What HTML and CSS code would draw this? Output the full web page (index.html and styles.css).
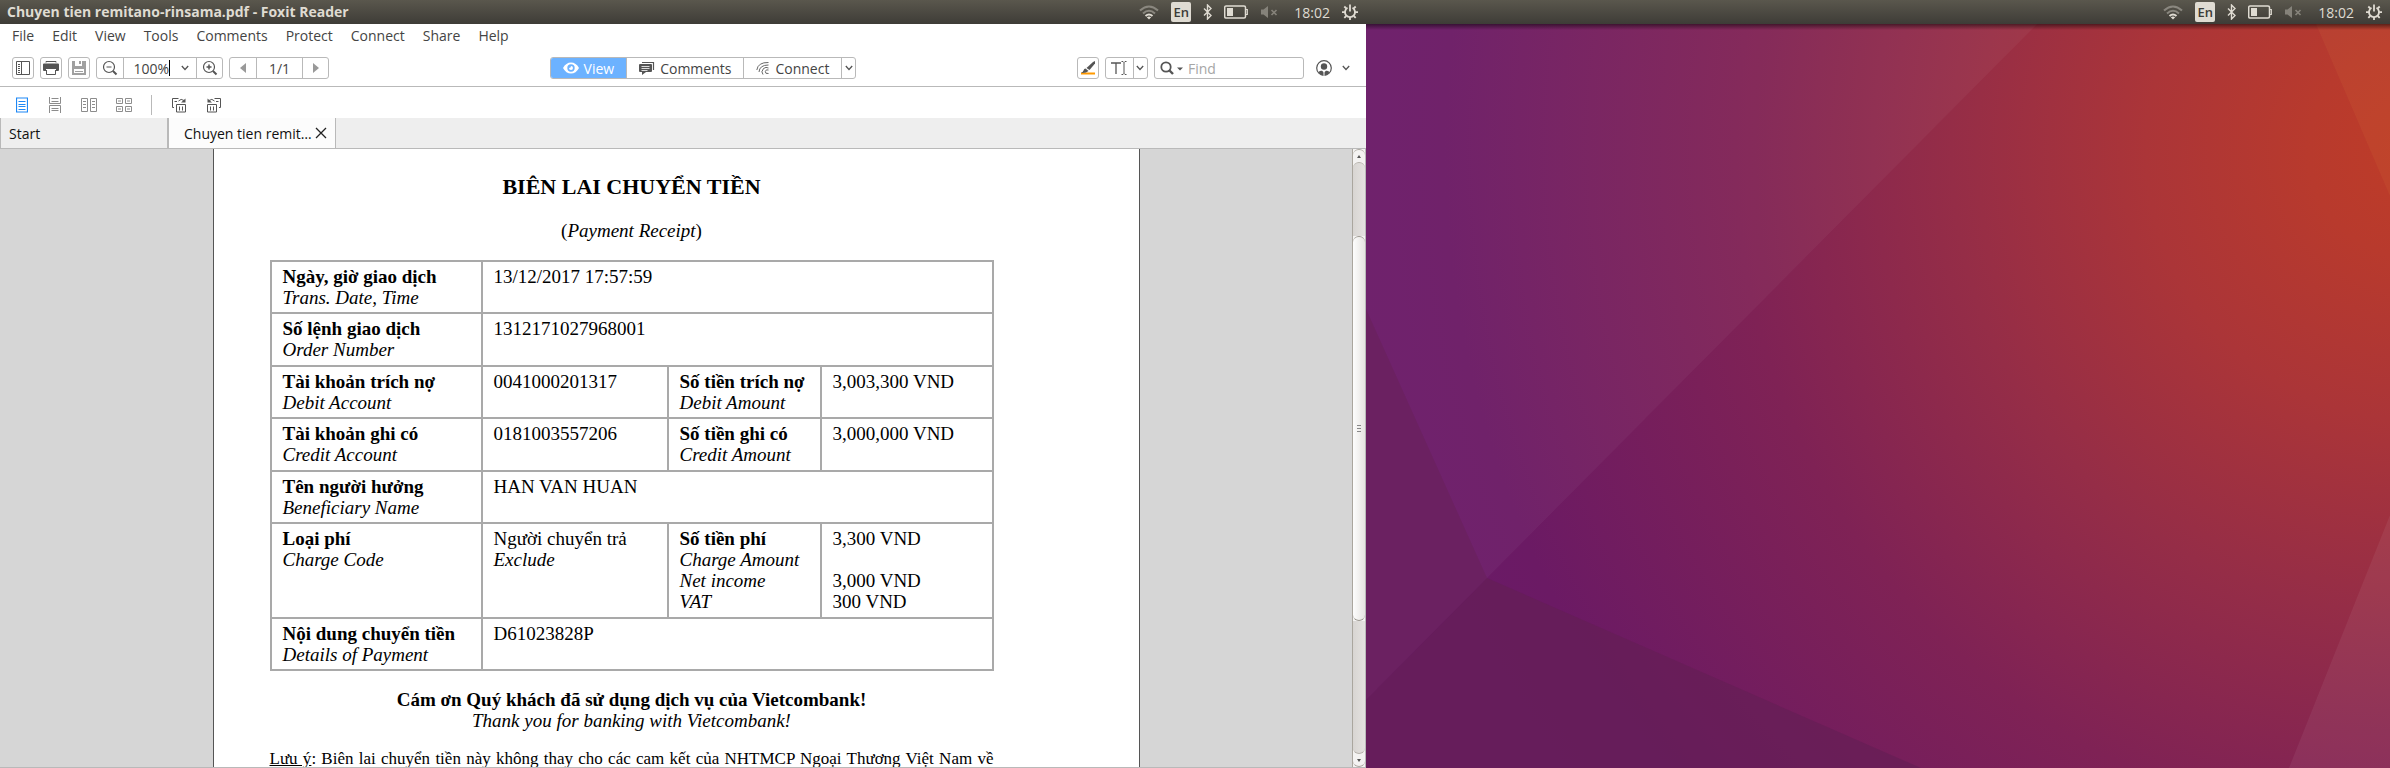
FILE: index.html
```html
<!DOCTYPE html>
<html lang="vi">
<head>
<meta charset="utf-8">
<title>Chuyen tien remitano-rinsama.pdf - Foxit Reader</title>
<link rel="stylesheet" href="styles.css">
</head>
<body>
<svg class="defs" aria-hidden="true">
  <symbol id="wifi" viewBox="0 0 20 16">
    <g fill="none" stroke-width="2">
      <path d="M1 6.5Q10-1.5 19 6.500" stroke="#8a877f"/>
      <path d="M4 9.500Q10 4 16 9.500" stroke="#8a877f"/>
      <path d="M6.500 12Q10 9 13.500 12" stroke="#dfdbd2"/>
    </g>
    <path d="M7.800 13.200Q10 12 12.200 13.200L10 15.500z" fill="#dfdbd2"/>
  </symbol>
  <symbol id="bluetooth" viewBox="0 0 9 16"><path d="M1 4.500L8 11.500L4.500 15V1L8 4.500L1 11.500" fill="none" stroke="#dfdbd2" stroke-width="1.400"/></symbol>
  <symbol id="battery" viewBox="0 0 24 14"><path d="M2 1H20Q21.500 1 21.500 2.500V11.500Q21.500 13 20 13H2Q.7 13 .7 11.500V2.500Q.7 1 2 1z" fill="none" stroke="#dfdbd2" stroke-width="1.500"/><path d="M3 3H9V11H3z" fill="#dfdbd2"/><path d="M22 4.500H23.300V9.500H22" fill="none" stroke="#dfdbd2" stroke-width="1.200"/></symbol>
  <symbol id="muted" viewBox="0 0 18 14"><path d="M1 4.500H3.500L8 1V13L3.500 9.500H1z" fill="#85827a"/><path d="M11.500 5L16.500 10M16.500 5L11.500 10" stroke="#85827a" stroke-width="1.700"/></symbol>
  <symbol id="session" viewBox="0 0 16 16"><path d="M5.500 3.800A5 5 0 1 0 10.500 3.800" fill="none" stroke="#dfdbd2" stroke-width="1.800"/><path d="M8 .5V7.500M8 13V16M0 8.200H3M13 8.200H16M2.300 2.500L4.200 4.400M13.700 2.500L11.800 4.400M2.300 13.900L4.200 12M13.700 13.900L11.800 12" stroke="#dfdbd2" stroke-width="1.800"/></symbol>
  <symbol id="chevron" viewBox="0 0 8 6"><path d="M.8 1L4 4.500L7.200 1" fill="none" stroke="#555" stroke-width="1.300"/></symbol>
</svg>

<main class="screens">
  <section class="monitor">
    <header class="panel">
      <h1 class="panel-title">Chuyen tien remitano-rinsama.pdf - Foxit Reader</h1>
      <div class="indicators">
        <svg class="i-wifi"><use href="#wifi"/></svg>
        <span class="lang">En</span>
        <svg class="i-bt"><use href="#bluetooth"/></svg>
        <svg class="i-bat"><use href="#battery"/></svg>
        <svg class="i-mute"><use href="#muted"/></svg>
        <time class="clock">18:02</time>
        <svg class="i-session"><use href="#session"/></svg>
      </div>
    </header>

    <div class="app">
      <nav class="menu">
        <button>File</button><button>Edit</button><button>View</button><button>Tools</button><button>Comments</button><button>Protect</button><button>Connect</button><button>Share</button><button>Help</button>
      </nav>

      <div class="toolbar">
        <div class="tools">
          <button class="box square" aria-label="Sidebar"><svg width="16" height="16" viewBox="0 0 16 16" fill="none" stroke="#555"><path d="M1.500 1.500H14.500V14.500H1.500zM6.500 1.500V14.500M3 4.500H5M3 6.500H5M3 8.500H5M3 10.500H5M3 12.500H5"/></svg></button>
          <button class="box square" aria-label="Print"><svg width="16" height="16" viewBox="0 0 16 16"><path d="M3 2.500V1.500H13V2.500M3.500 10V14.500H12.500V10" fill="none" stroke="#555"/><path d="M1 3.500H15Q16 3.500 16 4.500V10Q16 11 15 11H13V9H3V11H1Q0 11 0 10V4.500Q0 3.500 1 3.500z" fill="#555"/></svg></button>
          <button class="box square" aria-label="Save"><svg width="16" height="16" viewBox="0 0 16 16"><path d="M1 1H15V15H1z" fill="#a0a0a0"/><path d="M4 1H11V6H4zM3 9H13V13H3z" fill="#fff"/><path d="M8 1H10V4H8zM4 11H12V12H4z" fill="#a0a0a0"/></svg></button>
          <div class="box">
            <button class="seg zoom-btn" aria-label="Zoom out"><svg width="16" height="16" viewBox="0 0 16 16" fill="none" stroke="#555"><circle cx="7" cy="7" r="5.500" stroke-width="1.200"/><path d="M4.500 7H9.500"/><path d="M11 11L14.500 14.500" stroke-width="2"/></svg></button>
            <div class="seg zoom-field"><input class="zoom-input" aria-label="Zoom level" value="100%"><span class="caret"></span><button class="drop" aria-label="Zoom levels"><svg class="chev"><use href="#chevron"/></svg></button></div>
            <button class="seg zoom-btn" aria-label="Zoom in"><svg width="16" height="16" viewBox="0 0 16 16" fill="none" stroke="#555"><circle cx="7" cy="7" r="5.500" stroke-width="1.200"/><path d="M4.500 7H9.500M7 4.500V9.500" stroke-width="1.500"/><path d="M11 11L14.500 14.500" stroke-width="2"/></svg></button>
          </div>
          <div class="box">
            <button class="seg zoom-btn" aria-label="Previous page"><svg width="6" height="10" viewBox="0 0 6 10"><path d="M6 0V10L0 5z" fill="#999"/></svg></button>
            <input class="seg page-input" aria-label="Page" value="1/1">
            <button class="seg zoom-btn" aria-label="Next page"><svg width="6" height="10" viewBox="0 0 6 10"><path d="M0 0V10L6 5z" fill="#999"/></svg></button>
          </div>
        </div>

        <div class="box">
          <button class="seg mode mode-on"><svg width="16" height="12" viewBox="0 0 16 12"><path fill-rule="evenodd" d="M0 6Q3 .5 8 .5T16 6Q13 11.500 8 11.500T0 6zM8 2.300A3.700 3.700 0 1 0 8 9.700A3.700 3.700 0 1 0 8 2.300z" fill="#fff"/><path d="M8 4A2 2 0 1 1 6 6Q8 6 8 4z" fill="#fff"/></svg>View</button>
          <button class="seg mode"><svg width="16" height="14" viewBox="0 0 16 14"><path d="M3 1.500H14.500V9" fill="none" stroke="#555" stroke-width="1.200"/><path d="M1 3H12Q13 3 13 4V10Q13 11 12 11H7L3 14V11H1Q0 11 0 10V4Q0 3 1 3z" fill="#555"/><path d="M2.500 5.500H10.500M2.500 7.500H10.500M2.500 9.500H8.500" stroke="#fff" stroke-width=".8"/></svg>Comments</button>
          <button class="seg mode"><svg width="14" height="14" viewBox="0 0 14 14" fill="none" stroke="#666"><path d="M.8 9Q2 1.200 12.500 1.500M3 11Q3.500 4 12.500 4M12.500 7Q10 5.500 7.500 7.500Q4.500 11 7 13.500M12.500 9Q10 8 9.300 10.500Q9 13 12.500 12.500"/></svg>Connect</button>
          <button class="seg thin" aria-label="More"><svg class="chev"><use href="#chevron"/></svg></button>
        </div>

        <div class="tools">
          <button class="box square" aria-label="Highlight"><svg width="16" height="16" viewBox="0 0 16 16"><path d="M1 12.500H15V14.500H1z" fill="#f90"/><path d="M13 2L15 1V3.500L9.500 10L6.500 8z" fill="#555"/><path d="M5.500 8.500L8.500 11Q6 13.500 1 13Q3 12 3.500 10.500Q4 8.700 5.500 8.500z" fill="#555"/></svg></button>
          <div class="box">
            <button class="seg text-tool" aria-label="Typewriter"><svg width="18" height="16" viewBox="0 0 18 16" fill="none" stroke="#555"><path d="M1 3H11M6 3V14" stroke-width="1.300"/><path d="M11.500 1.500H13L14 2.500L15 1.500H16.500M14 2.500V13.500M11.500 14.500H13L14 13.500L15 14.500H16.500"/></svg></button>
            <button class="seg thin" aria-label="More text tools"><svg class="chev"><use href="#chevron"/></svg></button>
          </div>
          <label class="box find"><svg width="24" height="14" viewBox="0 0 24 14"><circle cx="6" cy="6" r="4.700" fill="none" stroke="#555" stroke-width="1.800"/><path d="M9 9L13 13" stroke="#555" stroke-width="2.400"/><path d="M17 6.500H23L20 9.500z" fill="#555"/></svg><input class="find-input" type="text" placeholder="Find" aria-label="Find"></label>
          <button class="account" aria-label="Account"><svg width="16" height="16" viewBox="0 0 16 16"><circle cx="8" cy="8" r="7.300" fill="none" stroke="#555" stroke-width="1.200"/><circle cx="8" cy="6.500" r="3.200" fill="#555"/><path d="M2.500 12Q4.500 10.300 6 10.800L8 12.500L10 10.800Q11.500 10.300 13.500 12Q11 15.500 8 15.500T2.500 12z" fill="#555"/><path d="M8 12V16" stroke="#fff"/></svg><svg class="chev"><use href="#chevron"/></svg></button>
        </div>
      </div>

      <div class="layouts">
        <button aria-label="Single page"><svg width="12" height="16" viewBox="0 0 12 16" fill="none" stroke="#1e88f5"><path d="M.5 1H11.500V15H.5z" stroke-width="1.200"/><path d="M2.500 4.500H9.500M2.500 7.500H9.500M2.500 9.500H9.500M2.500 12.500H9.500"/></svg></button>
        <button aria-label="Continuous"><svg width="12" height="16" viewBox="0 0 12 16" fill="none" stroke="#8c8c8c"><path d="M.5 0V6.500H11.500V0M.5 16V8.500H11.500V16M2.500 1.500H9.500M2.500 4.500H9.500M2.500 11.500H9.500M2.500 13.500H9.500"/></svg></button>
        <button aria-label="Facing"><svg width="16" height="16" viewBox="0 0 16 16" fill="none" stroke="#8c8c8c"><path d="M.5 1.500H6.500V14.500H.5zM9.500 1.500H15.500V14.500H9.500zM2 4.500H5M2 7.500H5M2 10.500H5M11 4.500H14M11 7.500H14M11 10.500H14"/></svg></button>
        <button aria-label="Continuous facing"><svg width="16" height="16" viewBox="0 0 16 16" fill="none" stroke="#8c8c8c"><path d="M.5 1.500H6.500V6.500H.5zM9.500 1.500H15.500V6.500H9.500zM.5 9.500H6.500V14.500H.5zM9.500 9.500H15.500V14.500H9.500zM2 4H5M11 4H14M2 12H5M11 12H14"/></svg></button>
        <span class="rule"></span>
        <button aria-label="Rotate right"><svg width="16" height="16" viewBox="0 0 16 16" fill="none" stroke="#555"><path d="M3 10.500H1.500V1.500H7.500M3.500 4.500H6M5.500 15V7.500H14.500V15zM8.500 9.500V13.500M11.500 9.500V13.500M7.500 4Q10 1 13 3.500"/><path d="M10 5.500H14.500V1.500z" fill="#555" stroke="none"/></svg></button>
        <button aria-label="Rotate left"><svg width="16" height="16" viewBox="0 0 16 16" fill="none" stroke="#555"><path d="M13 10.500H14.500V1.500H8.500M12.500 4.500H10M1.500 15V7.500H10.500V15zM4.500 9.500V13.500M7.500 9.500V13.500M8.500 4Q6 1 3 3.500"/><path d="M6 5.500H1.500V1.500z" fill="#555" stroke="none"/></svg></button>
      </div>

      <div class="tabs">
        <button class="tab">Start</button>
        <button class="tab tab-on">Chuyen tien remit…<svg width="12" height="12" viewBox="0 0 12 12"><path d="M1 1L11 11M11 1L1 11" stroke="#222" stroke-width="1.300"/></svg></button>
      </div>

      <div class="viewer">
        <div class="canvas">
          <article class="page">
            <h2 class="doc-title">BIÊN LAI CHUYỂN TIỀN</h2>
            <p class="doc-sub">(<i>Payment Receipt</i>)</p>
            <table class="receipt">
              <colgroup><col class="c1"><col class="c2"><col class="c3"><col></colgroup>
              <tr><th scope="row">Ngày, giờ giao dịch<br><i>Trans. Date, Time</i></th><td colspan="3">13/12/2017 17:57:59</td></tr>
              <tr><th scope="row">Số lệnh giao dịch<br><i>Order Number</i></th><td colspan="3">1312171027968001</td></tr>
              <tr><th scope="row">Tài khoản trích nợ<br><i>Debit Account</i></th><td>0041000201317</td><th scope="row">Số tiền trích nợ<br><i>Debit Amount</i></th><td>3,003,300 VND</td></tr>
              <tr><th scope="row">Tài khoản ghi có<br><i>Credit Account</i></th><td>0181003557206</td><th scope="row">Số tiền ghi có<br><i>Credit Amount</i></th><td>3,000,000 VND</td></tr>
              <tr><th scope="row">Tên người hưởng<br><i>Beneficiary Name</i></th><td colspan="3">HAN VAN HUAN</td></tr>
              <tr><th scope="row">Loại phí<br><i>Charge Code</i></th><td>Người chuyển trả<br><i>Exclude</i></td><th scope="row">Số tiền phí<br><i>Charge Amount<br>Net income<br>VAT</i></th><td>3,300 VND<br><br>3,000 VND<br>300 VND</td></tr>
              <tr><th scope="row">Nội dung chuyển tiền<br><i>Details of Payment</i></th><td colspan="3">D61023828P</td></tr>
            </table>
            <p class="thanks"><b>Cám ơn Quý khách đã sử dụng dịch vụ của Vietcombank!</b><br><i>Thank you for banking with Vietcombank!</i></p>
            <p class="note"><u>Lưu ý</u>: Biên lai chuyển tiền này không thay cho các cam kết của NHTMCP Ngoại Thương Việt Nam về</p>
          </article>
        </div>
        <div class="scroll">
          <button class="arrow arrow-up" aria-label="Scroll up"><svg width="4" height="3" viewBox="0 0 4 3"><path d="M0 3L2 0L4 3z" fill="#555"/></svg></button>
          <div class="trough trough-top"></div>
          <div class="thumb"><span class="grip"></span></div>
          <div class="trough trough-end"></div>
          <button class="arrow arrow-down" aria-label="Scroll down"><svg width="4" height="3" viewBox="0 0 4 3"><path d="M0 0L2 3L4 0z" fill="#555"/></svg></button>
        </div>
      </div>
    </div>
  </section>

  <section class="monitor">
    <header class="panel">
      <div class="indicators">
        <svg class="i-wifi"><use href="#wifi"/></svg>
        <span class="lang">En</span>
        <svg class="i-bt"><use href="#bluetooth"/></svg>
        <svg class="i-bat"><use href="#battery"/></svg>
        <svg class="i-mute"><use href="#muted"/></svg>
        <time class="clock">18:02</time>
        <svg class="i-session"><use href="#session"/></svg>
      </div>
    </header>
    <div class="desktop">
      <svg class="wallpaper" viewBox="0 24 1024 744" preserveAspectRatio="none">
        <defs>
          <radialGradient id="glow" gradientUnits="userSpaceOnUse" cx="1050" cy="150" r="1080">
            <stop offset="0" stop-color="#be3c28"/>
            <stop offset=".1" stop-color="#b83a2d"/>
            <stop offset=".25" stop-color="#ab3538"/>
            <stop offset=".43" stop-color="#952d47"/>
            <stop offset=".63" stop-color="#7f2255"/>
            <stop offset=".9" stop-color="#6b1a64"/>
            <stop offset="1" stop-color="#6a1a68"/>
          </radialGradient>
        </defs>
        <path d="M0 0H1024V768H0z" fill="url(#glow)"/>
        <path d="M0 0H695L121 578L0 700z" fill="#fff" fill-opacity=".04"/>
        <path d="M0 309L121 578L0 700z" fill="#6a215c" fill-opacity=".7"/>
        <path d="M0 700L121 578L555 768H0z" fill="#641e54" fill-opacity=".65"/>
        <path d="M950 24H1024V196z" fill="#ffc850" fill-opacity=".06"/>
        <path d="M1024 515V768H923z" fill="#fff" fill-opacity=".06"/>
      </svg>
    </div>
  </section>
</main>
</body>
</html>
```
FILE: styles.css
```css
* { box-sizing: border-box; }

body {
  margin: 0;
  font-family: "Open Sans", "Noto Sans", sans-serif;
  font-size: 14px;
  color: #444;
}

button, input {
  margin: 0;
  padding: 0;
  border: 0;
  background: none;
  font: inherit;
  color: inherit;
}

svg { display: block; flex: none; }
.defs { position: absolute; width: 0; height: 0; }

.screens {
  display: grid;
  grid-template-columns: 1366fr 1024fr;
  height: 100vh;
}

.monitor {
  display: flex;
  flex-direction: column;
  min-width: 0;
  min-height: 0;
}

/* Top panel */
.panel {
  display: flex;
  align-items: center;
  flex: none;
  height: 24px;
  padding: 0 8px 0 7px;
  background: linear-gradient(#5a574d, #3e3c37);
  color: #dfdbd2;
}
.panel-title { margin: 0; font-size: 14px; font-weight: 700; line-height: 24px; }
.indicators { display: flex; align-items: center; gap: 12px; margin-left: auto; }
.i-wifi { width: 20px; height: 16px; }
.i-bt { width: 9px; height: 16px; }
.i-bat { width: 24px; height: 14px; }
.i-mute { width: 18px; height: 14px; }
.i-session { width: 16px; height: 16px; }
.lang {
  width: 20px;
  height: 20px;
  border-radius: 2px;
  background: #dfdbd2;
  color: #3c3b37;
  font-size: 13px;
  font-weight: 600;
  line-height: 20px;
  text-align: center;
}
.clock { padding-left: 4px; font-size: 14px; }

/* Reader window */
.app { display: flex; flex-direction: column; flex: 1; min-height: 0; background: #fff; }

.menu { display: flex; gap: 18px; height: 24px; padding: 0 12px; line-height: 24px; }

.toolbar {
  display: flex;
  align-items: center;
  justify-content: space-between;
  height: 39px;
  padding: 2px 16px 0 12px;
  border-bottom: 1px solid #b9b9b9;
}
.tools { display: flex; align-items: center; gap: 6px; }
.box {
  display: flex;
  align-items: stretch;
  height: 22px;
  border: 1px solid #b9b9b9;
  border-radius: 3px;
  overflow: hidden;
}
.square { width: 22px; align-items: center; justify-content: center; }
.seg { display: flex; align-items: center; justify-content: center; }
.seg + .seg { border-left: 1px solid #b9b9b9; }
.zoom-btn { width: 26px; }
.zoom-field { width: 73px; padding-right: 4px; }
.zoom-input { width: 45px; height: 20px; text-align: right; outline: 0; }
.caret { width: 1px; height: 16px; background: #000; }
.drop { display: flex; align-items: center; justify-content: center; flex: 1; height: 20px; padding-left: 8px; }
.page-input { width: 46px; text-align: center; }
.chev { width: 8px; height: 6px; }
.mode { gap: 5px; padding: 0 12px; }
.mode-on { background: #6cb2ff; color: #fff; }
.thin { width: 14px; }
.text-tool { width: 27px; }
.find { align-items: center; width: 150px; padding-left: 5px; gap: 4px; }
.find-input { width: 100px; height: 20px; }
.find-input::placeholder { color: #a6a6a6; opacity: 1; }
.account { display: flex; align-items: center; gap: 10px; padding-left: 6px; }

.layouts { display: flex; align-items: center; gap: 19px; height: 31px; padding: 4px 15px 0; }
.layouts button { display: flex; justify-content: center; min-width: 14px; }
.rule { width: 1px; height: 20px; background: #b9b9b9; }

.tabs { display: flex; height: 31px; background: #eee; border-bottom: 1px solid #b9b9b9; }
.tab {
  display: flex;
  align-items: center;
  width: 168px;
  padding: 0 8px;
  border-left: 1px solid #b9b9b9;
  border-right: 1px solid #b9b9b9;
  color: #111;
  white-space: nowrap;
}
.tab-on { justify-content: space-between; padding-left: 15px; background: #fcfcfc; }

.viewer { display: flex; flex: 1; min-height: 0; border-bottom: 1px solid #b9b9b9; }
.canvas { flex: 1; min-width: 0; overflow: hidden; background: #d6d6d6; }

/* Document page */
.page {
  max-width: 927px;
  min-height: 100%;
  margin: 0 auto;
  padding: 26px 145px 0 56px;
  border: solid #555;
  border-width: 0 1px;
  background: #fff;
  color: #000;
  font-family: "Liberation Serif", serif;
  font-size: 19px;
  line-height: 21px;
}
.doc-title { margin: 0 0 21px; font-size: 22px; line-height: 24px; text-align: center; }
.doc-sub { margin: 0 0 19px; text-align: center; }
.receipt { width: 100%; height: 411px; border-collapse: collapse; table-layout: fixed; }
.receipt th, .receipt td {
  padding: 4px 11px;
  border: 2px solid #a9a9a9;
  text-align: left;
  vertical-align: top;
  font-weight: 400;
  white-space: nowrap;
}
.receipt th { font-weight: 700; }
.receipt th i { font-weight: 400; }
.c1 { width: 211px; }
.c2 { width: 186px; }
.c3 { width: 153px; }
.thanks { margin: 18px 0 17px; text-align: center; }
.note { margin: 0; font-size: 17px; text-align-last: justify; white-space: nowrap; }

/* Scrollbar */
.scroll {
  display: flex;
  flex-direction: column;
  width: 14px;
  border-left: 1px solid #aaa69e;
  border-right: 1px solid #b9b9b9;
  background: #f4f3f2;
}
.arrow { display: flex; align-items: center; justify-content: center; height: 13px; background: #f4f3f2; }
.arrow-up { border-top: 1px solid #aaa69e; border-radius: 6px 6px 0 0; }
.arrow-down { border-bottom: 1px solid #aaa69e; border-radius: 0 0 6px 6px; }
.trough { background: linear-gradient(90deg, #d8d5d2, #e4e2e0); }
.trough-top { flex: 73; border-top: 1px solid #b5b1aa; border-radius: 6px 6px 0 0; }
.trough-end { flex: 133; border-bottom: 1px solid #b5b1aa; border-radius: 0 0 6px 6px; }
.thumb {
  display: flex;
  align-items: center;
  justify-content: center;
  flex: 385;
  border: solid #9a968e;
  border-width: 1px 0;
  border-radius: 6px;
  background: linear-gradient(90deg, #fdfdfd, #e6e4e1);
}
.grip { width: 4px; height: 7px; background: repeating-linear-gradient(#888 0 1px, transparent 1px 3px); }

/* Wallpaper */
.desktop { position: relative; flex: 1; min-height: 0; }
.desktop::before {
  content: "";
  position: absolute;
  top: 0;
  left: 0;
  right: 0;
  height: 6px;
  background: linear-gradient(rgba(0, 0, 0, .5), transparent);
}
.wallpaper { width: 100%; height: 100%; }
```
